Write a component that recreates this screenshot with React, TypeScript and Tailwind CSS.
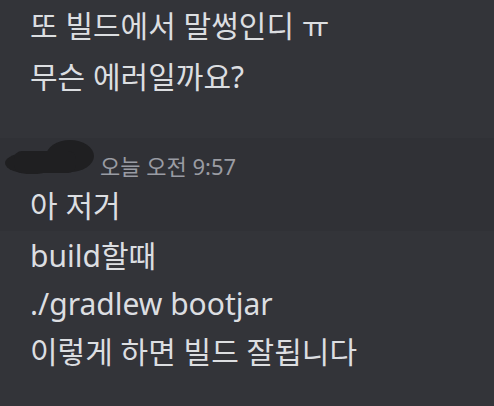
const font = { fontFamily: '"Noto Sans", "Noto Sans CJK KR", sans-serif' }

function Line({ children, h = "h-[48px]" }: { children: React.ReactNode; h?: string }) {
  return <div className={`${h} flex items-center`}>{children}</div>
}

export default function App() {
  return (
    <div
      className="w-[494px] h-[406px] overflow-hidden bg-[#333439] text-[#dcdee1] text-[30px]"
      style={font}
    >
      <div className="pl-[30px] h-[138px]">
        <Line h="h-[50px]">또 빌드에서 말썽인디 ㅠ</Line>
        <Line h="h-[52px]">무슨 에러일까요?</Line>
      </div>
      <div className="relative bg-[#303136] pl-[30px] pb-[2px]">
        <svg
          className="absolute left-[4px] top-[1px] w-[90px] h-[36px]"
          viewBox="0 0 90 36"
        >
          <ellipse cx="28" cy="24" rx="27" ry="11" fill="#1f1f21" />
          <ellipse cx="66" cy="17" rx="24" ry="16" fill="#1f1f21" />
          <rect x="10" y="12" width="62" height="22" rx="8" fill="#1f1f21" />
        </svg>
        <div className="h-[43px] pt-[12px] flex items-center">
          <span className="ml-[70px] text-[22px] text-[#9a9ca3] leading-none">
            오늘 오전 9:57
          </span>
        </div>
        <Line>아 저거</Line>
      </div>
      <div className="pl-[30px]">
        <Line>build할때</Line>
        <Line>./gradlew bootjar</Line>
        <Line>이렇게 하면 빌드 잘됩니다</Line>
      </div>
    </div>
  )
}
